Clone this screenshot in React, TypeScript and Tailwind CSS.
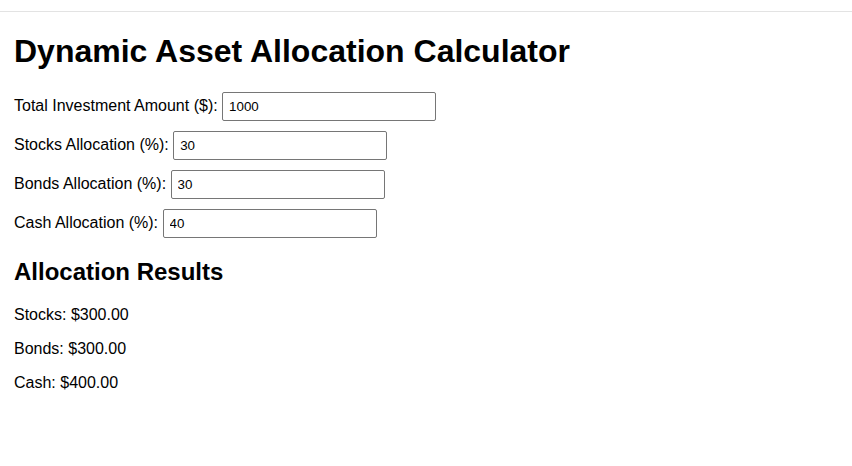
import { useState } from "react";

export default function App() {
  const [total, setTotal] = useState("1000");
  const [stocks, setStocks] = useState("30");
  const [bonds, setBonds] = useState("30");
  const [cash, setCash] = useState("40");

  const amount = parseFloat(total) || 0;
  const part = (pct: string) => ((amount * (parseFloat(pct) || 0)) / 100).toFixed(2);

  const fields = [
    { label: "Total Investment Amount ($):", value: total, set: setTotal },
    { label: "Stocks Allocation (%):", value: stocks, set: setStocks },
    { label: "Bonds Allocation (%):", value: bonds, set: setBonds },
    { label: "Cash Allocation (%):", value: cash, set: setCash },
  ];

  return (
    <div className="min-h-screen bg-white text-black font-['Liberation_Sans',Arial,sans-serif]">
      <div className="h-[12px] border-b border-[#e3e3e3]" />
      <div className="px-[14px]">
        <h1 className="mt-[21px] mb-[22px] text-[32px] leading-[37px] font-bold">Dynamic Asset Allocation Calculator</h1>

        {fields.map((f) => (
          <div key={f.label} className="mb-[10px] text-[16px] leading-[18px]">
            <label>{f.label}</label>{" "}
            <input
              type="number"
              value={f.value}
              onChange={(e) => f.set(e.target.value)}
              className="w-[214px] h-[29px] px-[6px] border border-[#767676] rounded-[2px] text-[13.33px] text-black bg-white outline-none align-baseline [appearance:textfield] [&::-webkit-inner-spin-button]:appearance-none"
            />
          </div>
        ))}

        <h2 className="mt-[20px] text-[24px] leading-[28px] font-bold">Allocation Results</h2>
        <div className="mt-[20px] space-y-[16px] text-[16px] leading-[18px]">
          <p>Stocks: ${part(stocks)}</p>
          <p>Bonds: ${part(bonds)}</p>
          <p>Cash: ${part(cash)}</p>
        </div>
      </div>
    </div>
  );
}
